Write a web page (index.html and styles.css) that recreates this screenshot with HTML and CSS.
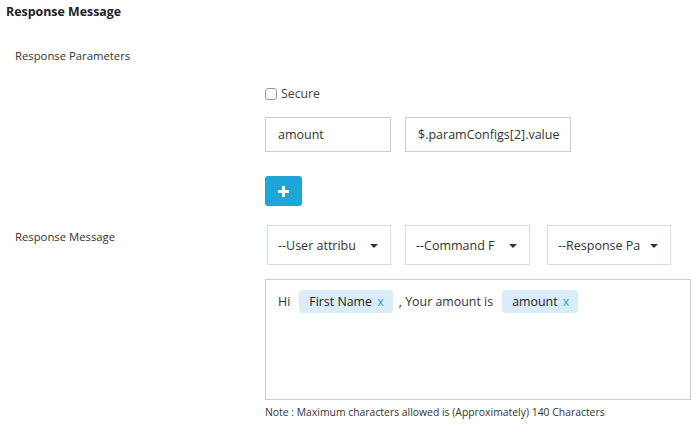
FILE: index.html
```html
<!DOCTYPE html>
<html>
<head>
<meta charset="utf-8">
<link rel="stylesheet" href="styles.css">
</head>
<body>
<div class="page">
  <h1 class="title">Response Message</h1>

  <div class="row row-params">
    <div class="label">Response Parameters</div>
    <div class="content">
      <label class="check"><span class="box"></span>Secure</label>
      <div class="inputs">
        <div class="input in-key">amount</div>
        <div class="input in-val">$.paramConfigs[2].value</div>
      </div>
      <button class="add">
        <svg width="11" height="11" viewBox="0 0 11 11"><path d="M4 0h3v4h4v3H7v4H4V7H0V4h4z" fill="#fff"/></svg>
      </button>
    </div>
  </div>

  <div class="row row-msg">
    <div class="label label-msg">Response Message</div>
    <div class="content">
      <div class="selects">
        <div class="select sel-1"><span class="sel-text">--User attribu</span><span class="caret"></span></div>
        <div class="select sel-2"><span class="sel-text">--Command F</span><span class="caret"></span></div>
        <div class="select sel-3"><span class="sel-text">--Response Pa</span><span class="caret"></span></div>
      </div>
      <div class="editor">
        <span class="plain">Hi</span>
        <span class="chip">First Name <span class="x">x</span></span>
        <span class="plain">, Your amount is</span>
        <span class="chip">amount <span class="x">x</span></span>
      </div>
      <div class="note">Note : Maximum characters allowed is (Approximately) 140 Characters</div>
    </div>
  </div>
</div>
</body>
</html>
```

FILE: styles.css
```css
* { box-sizing: border-box; }
html, body { margin: 0; padding: 0; background: #fff; }
body {
  font-family: "Open Sans", "Noto Sans", "Liberation Sans", sans-serif;
  color: #333;
  font-size: 12px;
}
.page { padding: 4px 0 0 0; }
.title {
  margin: 0 0 0 6px;
  font-size: 12.4px;
  font-weight: bold;
  line-height: 16px;
  color: #222;
}
.row {
  display: grid;
  grid-template-columns: 265px 1fr;
}
.row-params { margin-top: 28px; }
.label {
  padding-left: 15px;
  line-height: 16px;
  font-size: 11.3px;
  color: #333;
}
.content { display: flex; flex-direction: column; align-items: flex-start; }
.row-params .content { padding-top: 38px; }
.check {
  display: flex;
  align-items: center;
  line-height: 16px;
  font-size: 12.3px;
  color: #444;
}
.box {
  width: 12px;
  height: 12px;
  border: 1px solid #999;
  border-radius: 3px;
  margin-right: 4px;
  background: #fff;
}
.inputs { display: flex; gap: 14px; margin-top: 15px; }
.input {
  height: 35px;
  border: 1px solid #ccc;
  padding: 0 12px;
  line-height: 33px;
  color: #333;
  font-size: 12.5px;
}
.in-key { width: 126px; }
.in-val { width: 166px; }
.add {
  margin-top: 24px;
  width: 37px;
  height: 30px;
  border: none;
  border-radius: 3px;
  background: #1fa6d9;
  display: flex;
  align-items: center;
  justify-content: center;
  padding: 0;
}
.row-msg { margin-top: 19px; }
.label-msg { padding-top: 4px; }
.selects { display: flex; margin-left: 2px; }
.select {
  height: 40px;
  border: 1px solid #d5dce2;
  display: flex;
  align-items: center;
  padding-left: 10px;
  position: relative;
  font-size: 12.5px;
  color: #333;
}
.sel-text { overflow: hidden; white-space: nowrap; }
.sel-1 { width: 124px; }
.sel-1 .sel-text { width: 82px; }
.sel-2 { width: 125px; margin-left: 14px; }
.sel-2 .sel-text { width: 84px; }
.sel-3 { width: 124px; margin-left: 17px; }
.sel-3 .sel-text { width: 84px; }
.caret {
  position: absolute;
  right: 12px;
  top: 18px;
  width: 0;
  height: 0;
  border-left: 4px solid transparent;
  border-right: 4px solid transparent;
  border-top: 4px solid #333;
}
.editor {
  margin-top: 14px;
  width: 426px;
  height: 121px;
  border: 1px solid #ccc;
  padding: 10px 12px;
  display: flex;
  align-items: flex-start;
  font-size: 12.4px;
}
.plain { line-height: 23px; }
.plain:first-child { margin-right: 9px; }
.editor .plain:nth-child(3) { margin: 0 9px 0 6px; }
.chip {
  display: inline-block;
  height: 23px;
  line-height: 23px;
  background: #d9ecfa;
  border-radius: 4px;
  padding: 0 9px 0 10px;
  color: #222;
}
.x { color: #2a9fd8; margin-left: 2px; }
.note {
  margin-top: 5px;
  font-size: 10.4px;
  line-height: 14px;
  color: #333;
}
```
